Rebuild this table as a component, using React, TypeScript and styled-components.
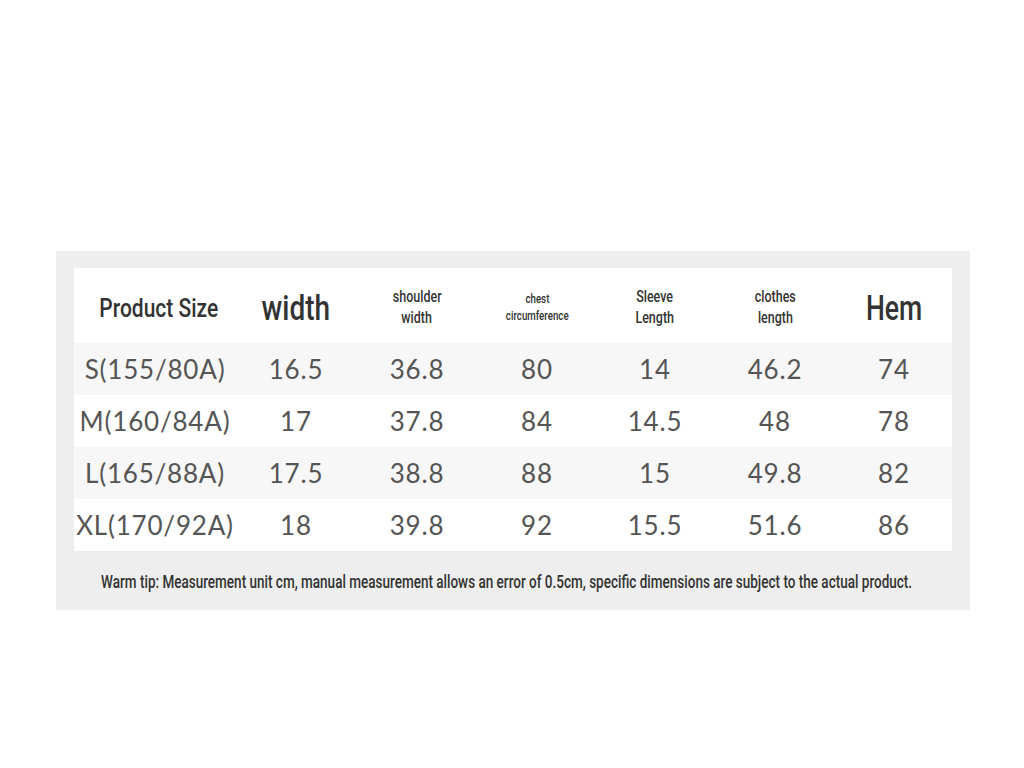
import React from "react";
import styled, { createGlobalStyle } from "styled-components";

const Global = createGlobalStyle`
  html, body {
    margin: 0;
    padding: 0;
    background: #ffffff;
  }
`;

type Header = { label: string[]; size: number; lh: number; scale: number; shift?: number };

const headers: Header[] = [
  { label: ["Product Size"], size: 25, lh: 1, scale: 0.84, shift: 8 },
  { label: ["width"], size: 35, lh: 1, scale: 0.8 },
  { label: ["shoulder", "width"], size: 16, lh: 1.3, scale: 0.78 },
  { label: ["chest", "circumference"], size: 12.5, lh: 1.35, scale: 0.78 },
  { label: ["Sleeve", "Length"], size: 16, lh: 1.3, scale: 0.78 },
  { label: ["clothes", "length"], size: 16, lh: 1.3, scale: 0.78 },
  { label: ["Hem"], size: 35, lh: 1, scale: 0.76 },
];

const rows = [
  ["S(155/80A)", "16.5", "36.8", "80", "14", "46.2", "74"],
  ["M(160/84A)", "17", "37.8", "84", "14.5", "48", "78"],
  ["L(165/88A)", "17.5", "38.8", "88", "15", "49.8", "82"],
  ["XL(170/92A)", "18", "39.8", "92", "15.5", "51.6", "86"],
];

export default function App() {
  return (
    <>
      <Global />
      <Page>
        <Panel>
          <Table>
            <HeadRow>
              {headers.map((h, i) => (
                <HeadCell key={i} $size={h.size} $lh={h.lh} $shift={h.shift ?? 0}>
                  {h.label.map((l, j) => (
                    <Narrow key={j} $scale={h.scale}>
                      {l}
                    </Narrow>
                  ))}
                </HeadCell>
              ))}
            </HeadRow>
            {rows.map((r, i) => (
              <BodyRow key={i} $shade={i % 2 === 0}>
                {r.map((c, j) => (
                  <Cell key={j}>{c}</Cell>
                ))}
              </BodyRow>
            ))}
          </Table>
          <Tip>
            <Narrow $scale={0.76}>
              Warm tip: Measurement unit cm, manual measurement allows an error of 0.5cm, specific dimensions are subject to
              the actual product.
            </Narrow>
          </Tip>
        </Panel>
      </Page>
    </>
  );
}

const columns = "162px 120px 122px 118px 118px 122px 1fr";

const Page = styled.div`
  width: 1024px;
  height: 768px;
  padding: 251px 0 0 56px;
  box-sizing: border-box;
`;

const Panel = styled.div`
  width: 914px;
  height: 359px;
  box-sizing: border-box;
  background: #eeeeee;
  padding: 17px 18px 0 18px;
  display: flex;
  flex-direction: column;
`;

const Table = styled.div`
  background: #ffffff;
  display: flex;
  flex-direction: column;
`;

const HeadRow = styled.div`
  display: grid;
  grid-template-columns: ${columns};
  height: 75px;
  align-items: center;
`;

const HeadCell = styled.div<{ $size: number; $lh: number; $shift: number }>`
  display: flex;
  flex-direction: column;
  align-items: center;
  justify-content: center;
  font-family: "Roboto", "Liberation Sans", sans-serif;
  font-weight: 500;
  font-size: ${(p) => p.$size}px;
  line-height: ${(p) => p.$lh};
  color: #333333;
  padding-top: 5px;
  padding-left: ${(p) => p.$shift}px;
`;

const Narrow = styled.span<{ $scale: number }>`
  display: inline-block;
  white-space: nowrap;
  transform: scaleX(${(p) => p.$scale});
  transform-origin: center;
`;

const BodyRow = styled.div<{ $shade: boolean }>`
  display: grid;
  grid-template-columns: ${columns};
  height: 52px;
  align-items: center;
  background: ${(p) => (p.$shade ? "#f7f7f7" : "#ffffff")};
`;

const Cell = styled.div`
  text-align: center;
  font-family: "Lato", "Noto Sans", sans-serif;
  font-size: 26px;
  letter-spacing: 0.8px;
  color: #555555;
`;

const Tip = styled.div`
  margin-top: 20px;
  padding-right: 12px;
  display: flex;
  justify-content: center;
  font-family: "Roboto", "Liberation Sans", sans-serif;
  font-weight: 500;
  font-size: 17.8px;
  color: #333333;
`;
